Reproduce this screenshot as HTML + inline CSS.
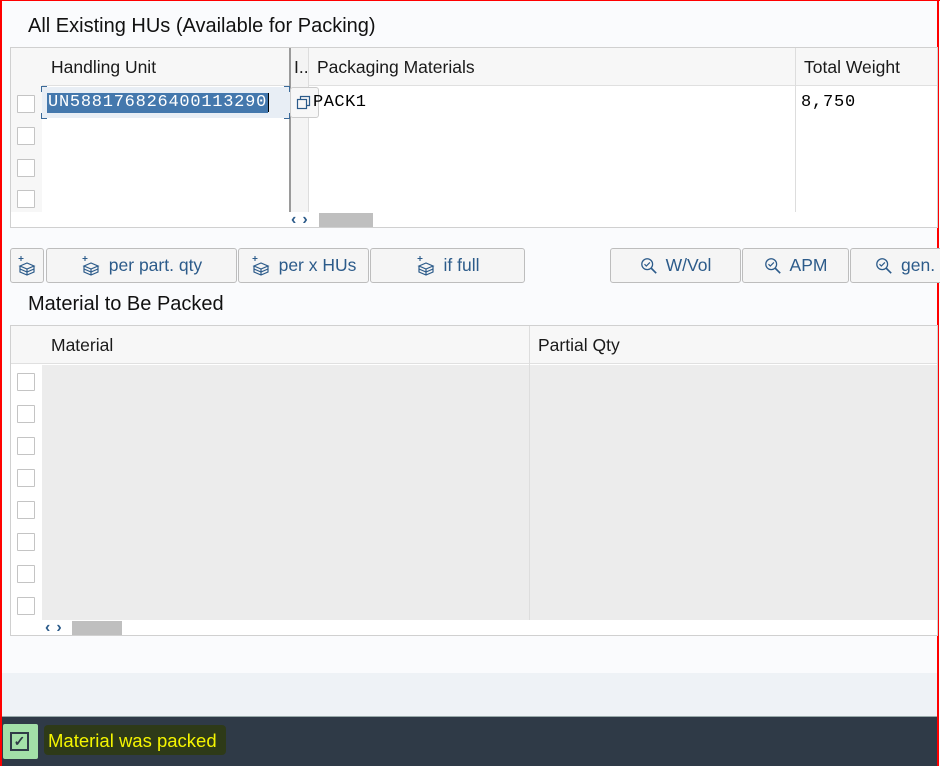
<!DOCTYPE html>
<html><head><meta charset="utf-8"><style>
*{box-sizing:border-box;margin:0;padding:0}
body{width:940px;height:766px;overflow:hidden;background:#fafbfd;font-family:"Liberation Sans",sans-serif;position:relative;color:#1d1d1d}
.a{position:absolute}
.t{font-size:20px;color:#111}
.hd{font-size:17.5px;color:#1a1a1a}
.cb{position:absolute;width:18px;height:18px;border:1px solid #c4c4c4;background:#fff;border-radius:1px}
.btn{position:absolute;top:248px;height:35px;border:1px solid #bdbdbd;border-radius:3px;background:#f5f5f5;color:#2c5b8a;font-size:17.5px;display:flex;align-items:center;justify-content:center;gap:8px}
.mono{font-family:"Liberation Mono",monospace;font-size:17px}
.arr{position:absolute;font-size:16px;font-weight:bold;color:#2c5b8a;letter-spacing:6px;line-height:14px}
</style></head><body>
<div class="a" style="left:0;top:0;width:940px;height:1px;background:#f00"></div>
<div class="a" style="left:0;top:0;width:2px;height:766px;background:#f00"></div>
<div class="a" style="left:937px;top:0;width:2px;height:766px;background:#f00"></div>

<div class="a t" style="left:28px;top:15px">All Existing HUs (Available for Packing)</div>

<div class="a" style="left:10px;top:47px;width:928px;height:181px;border:1px solid #d0d0d0;background:#fff"></div>
<div class="a" style="left:11px;top:48px;width:926px;height:38px;background:#f7f7f7;border-bottom:1px solid #e0e0e0"></div>
<div class="a" style="left:11px;top:48px;width:31px;height:164px;background:#f7f7f7"></div>
<div class="a" style="left:289px;top:48px;width:2px;height:164px;background:#9a9a9a"></div>
<div class="a" style="left:291px;top:48px;width:18px;height:164px;background:#f4f4f4;border-right:1px solid #ddd"></div>
<div class="a" style="left:795px;top:48px;width:1px;height:164px;background:#ddd"></div>
<div class="a hd" style="left:51px;top:57px">Handling Unit</div>
<div class="a hd" style="left:294px;top:57px">I..</div>
<div class="a hd" style="left:317px;top:57px">Packaging Materials</div>
<div class="a hd" style="left:804px;top:57px">Total Weight</div>
<div class="a" style="left:42px;top:87px;width:248px;height:31px;background:#e8eef5"></div>
<div class="a" style="left:41px;top:86px;width:6px;height:6px;border-left:1px solid #3a6a9a;border-top:1px solid #3a6a9a"></div>
<div class="a" style="left:41px;top:113px;width:6px;height:6px;border-left:1px solid #3a6a9a;border-bottom:1px solid #3a6a9a"></div>
<div class="a" style="left:284px;top:86px;width:6px;height:6px;border-right:1px solid #3a6a9a;border-top:1px solid #3a6a9a"></div>
<div class="a" style="left:284px;top:113px;width:6px;height:6px;border-right:1px solid #3a6a9a;border-bottom:1px solid #3a6a9a"></div>
<div class="a mono" style="left:47px;top:93px;height:20px;width:221px;background:#4478ad;color:#fff;padding:0 1px;line-height:19px;letter-spacing:0.75px;white-space:nowrap;overflow:hidden">UN588176826400113290</div>
<div class="a" style="left:268px;top:93px;width:1px;height:19px;background:#000"></div>
<div class="a" style="left:290px;top:87px;width:29px;height:31px;border:1px solid #ccc;border-radius:3px;background:#f7f7f7"></div>
<svg class="a" style="left:295px;top:94px" width="16" height="16"><rect x="2.5" y="5.5" width="9" height="9" fill="none" stroke="#2c5b8a" stroke-width="1.2"/><path d="M5.5 5.5V2.5h9v9h-3" fill="none" stroke="#2c5b8a" stroke-width="1.2"/></svg>
<div class="a mono" style="left:313px;top:93px;color:#000;letter-spacing:0.5px">PACK1</div>
<div class="a mono" style="left:801px;top:93px;color:#000;letter-spacing:0.8px">8,750</div>
<div class="cb" style="left:17px;top:95px"></div>
<div class="cb" style="left:17px;top:127px"></div>
<div class="cb" style="left:17px;top:159px"></div>
<div class="cb" style="left:17px;top:190px"></div>
<div class="arr" style="left:291px;top:213px">‹›</div>
<div class="a" style="left:319px;top:213px;width:54px;height:14px;background:#bfbfbf"></div>

<svg width="0" height="0" style="position:absolute"><defs><symbol id="bx" viewBox="0 0 20 22"><path d="M4 1v5M1.5 3.5h5" stroke="#2c5b8a" stroke-width="1.1"/><path d="M3 11l7-3 7 3-7 3zM3 11v6l7 3 7-3v-6M10 14v6M3 14l7 3 7-3" fill="none" stroke="#2c5b8a" stroke-width="1.2"/></symbol><symbol id="mg" viewBox="0 0 20 20"><circle cx="8" cy="8" r="6" fill="none" stroke="#2c5b8a" stroke-width="1.4"/><path d="M12.5 12.5L18 18" stroke="#2c5b8a" stroke-width="1.8"/><path d="M5 8l2 2 4-4" fill="none" stroke="#2c5b8a" stroke-width="1.3"/></symbol></defs></svg>
<div class="btn" style="left:10px;width:34px"><svg width="20" height="22"><use href="#bx"/></svg></div>
<div class="btn" style="left:46px;width:191px"><svg width="20" height="22"><use href="#bx"/></svg>per part. qty</div>
<div class="btn" style="left:238px;width:131px"><svg width="20" height="22"><use href="#bx"/></svg>per x HUs</div>
<div class="btn" style="left:370px;width:155px"><svg width="20" height="22"><use href="#bx"/></svg>if full</div>
<div class="btn" style="left:610px;width:131px"><svg width="18" height="18"><use href="#mg"/></svg>W/Vol</div>
<div class="btn" style="left:742px;width:107px"><svg width="18" height="18"><use href="#mg"/></svg>APM</div>
<div class="btn" style="left:850px;width:100px;justify-content:flex-start;padding-left:24px"><svg width="18" height="18"><use href="#mg"/></svg>gen.</div>

<div class="a t" style="left:28px;top:293px">Material to Be Packed</div>

<div class="a" style="left:10px;top:325px;width:928px;height:311px;border:1px solid #d0d0d0;background:#fff"></div>
<div class="a" style="left:11px;top:326px;width:926px;height:38px;background:#f7f7f7;border-bottom:1px solid #e0e0e0"></div>
<div class="a" style="left:42px;top:365px;width:895px;height:255px;background:#ececec"></div>
<div class="a" style="left:529px;top:326px;width:1px;height:294px;background:#ddd"></div>
<div class="a hd" style="left:51px;top:335px">Material</div>
<div class="a hd" style="left:538px;top:335px">Partial Qty</div>
<div class="cb" style="left:17px;top:373px"></div>
<div class="cb" style="left:17px;top:405px"></div>
<div class="cb" style="left:17px;top:437px"></div>
<div class="cb" style="left:17px;top:469px"></div>
<div class="cb" style="left:17px;top:501px"></div>
<div class="cb" style="left:17px;top:533px"></div>
<div class="cb" style="left:17px;top:565px"></div>
<div class="cb" style="left:17px;top:597px"></div>
<div class="arr" style="left:45px;top:621px">‹›</div>
<div class="a" style="left:72px;top:621px;width:50px;height:14px;background:#bfbfbf"></div>

<div class="a" style="left:2px;top:673px;width:935px;height:43px;background:#eef2f6"></div>
<div class="a" style="left:2px;top:716px;width:935px;height:50px;background:#2f3a47;border-top:1px solid #9aa"></div>
<div class="a" style="left:3px;top:724px;width:35px;height:35px;background:#a3e0a8;border-radius:2px"></div>
<div class="a" style="left:10px;top:732px;width:19px;height:19px;border:2px solid #2f3a47;font-size:14px;line-height:15px;text-align:center;color:#2f3a47;font-weight:bold">✓</div>
<div class="a" style="left:44px;top:725px;width:182px;height:30px;background:#2e3a18;border-radius:4px"></div>
<div class="a" style="left:48px;top:730px;font-size:18.5px;color:#f5f500">Material was packed</div>
</body></html>
